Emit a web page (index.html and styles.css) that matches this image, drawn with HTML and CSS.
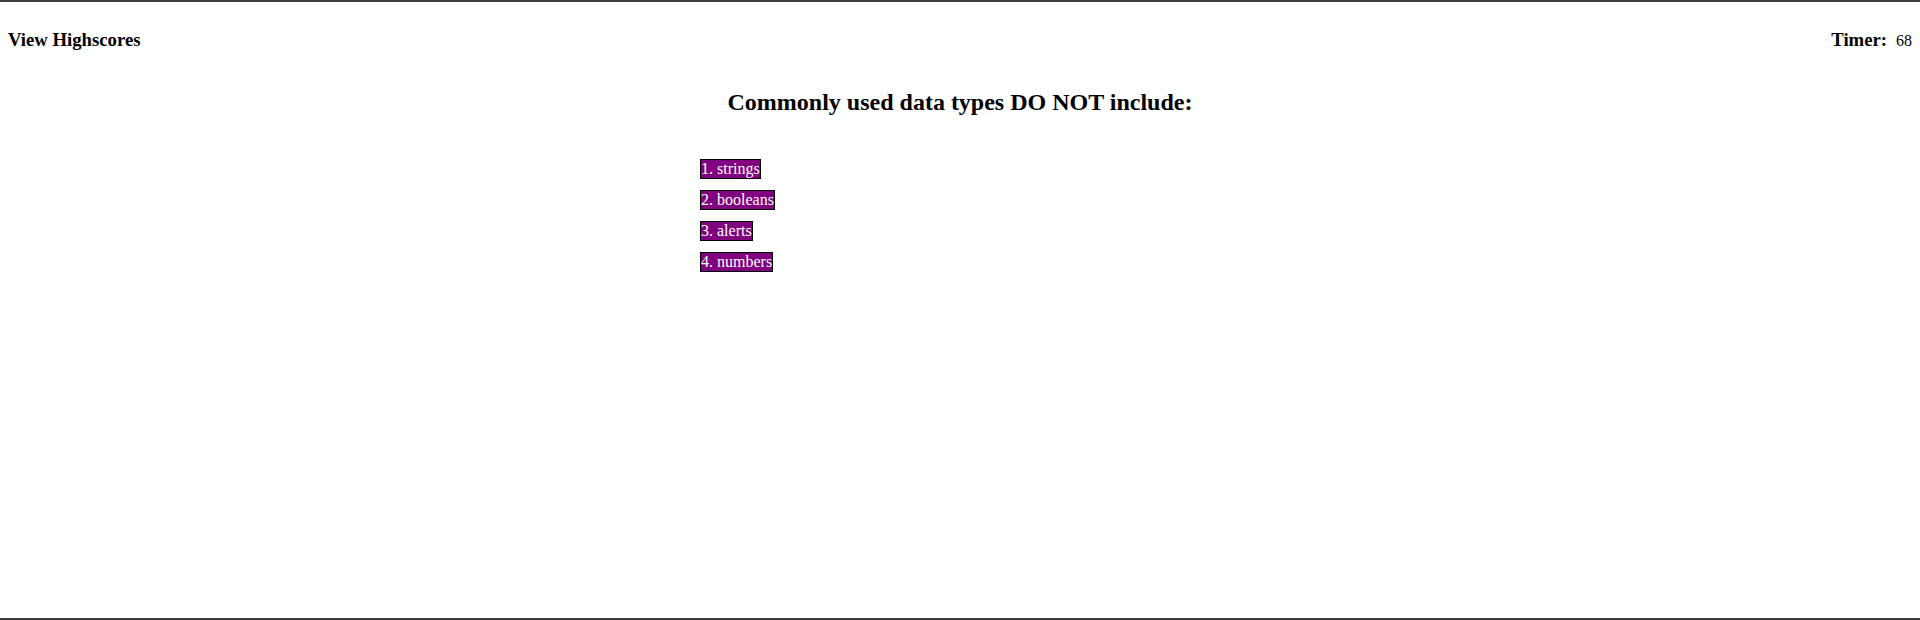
FILE: index.html
```html
<!DOCTYPE html>
<html>
<head>
<meta charset="utf-8">
<link rel="stylesheet" href="styles.css">
</head>
<body>
<div class="page">
  <header class="topbar">
    <h3 class="link">View Highscores</h3>
    <div class="timer">
      <h3 class="timer-label">Timer:</h3>
      <span class="timer-value">68</span>
    </div>
  </header>
  <main class="quiz">
    <h2 class="question">Commonly used data types DO NOT include:</h2>
    <div class="answers">
      <button class="answer">1. strings</button>
      <button class="answer">2. booleans</button>
      <button class="answer">3. alerts</button>
      <button class="answer">4. numbers</button>
    </div>
  </main>
</div>
</body>
</html>
```

FILE: styles.css
```css
html, body {
  margin: 0;
  padding: 0;
  background: #ffffff;
}

body {
  font-family: "Liberation Serif", "Times New Roman", serif;
  color: #000000;
}

.page {
  box-sizing: border-box;
  height: 620px;
  border-top: 2px solid #3c3c3c;
  border-bottom: 2px solid #3c3c3c;
  padding: 8px;
}

.topbar {
  display: flex;
  justify-content: space-between;
  align-items: baseline;
}

.topbar h3 {
  font-size: 18.72px;
  font-weight: bold;
  margin: 18.72px 0;
}

.timer {
  display: flex;
  align-items: baseline;
  gap: 9px;
}

.timer-value {
  font-size: 16px;
}

.quiz {
  width: 520px;
  margin: 0 auto;
}

.question {
  font-size: 24px;
  font-weight: bold;
  text-align: center;
  margin: 20px -200px 0;
}

.answers {
  display: flex;
  flex-direction: column;
  align-items: flex-start;
  gap: 11px;
  margin-top: 43px;
}

.answer {
  font-family: "Liberation Serif", "Times New Roman", serif;
  font-size: 16px;
  line-height: 18px;
  padding: 0;
  margin: 0;
  border: 1px solid #000000;
  background: #800080;
  color: #ffffff;
}
```
